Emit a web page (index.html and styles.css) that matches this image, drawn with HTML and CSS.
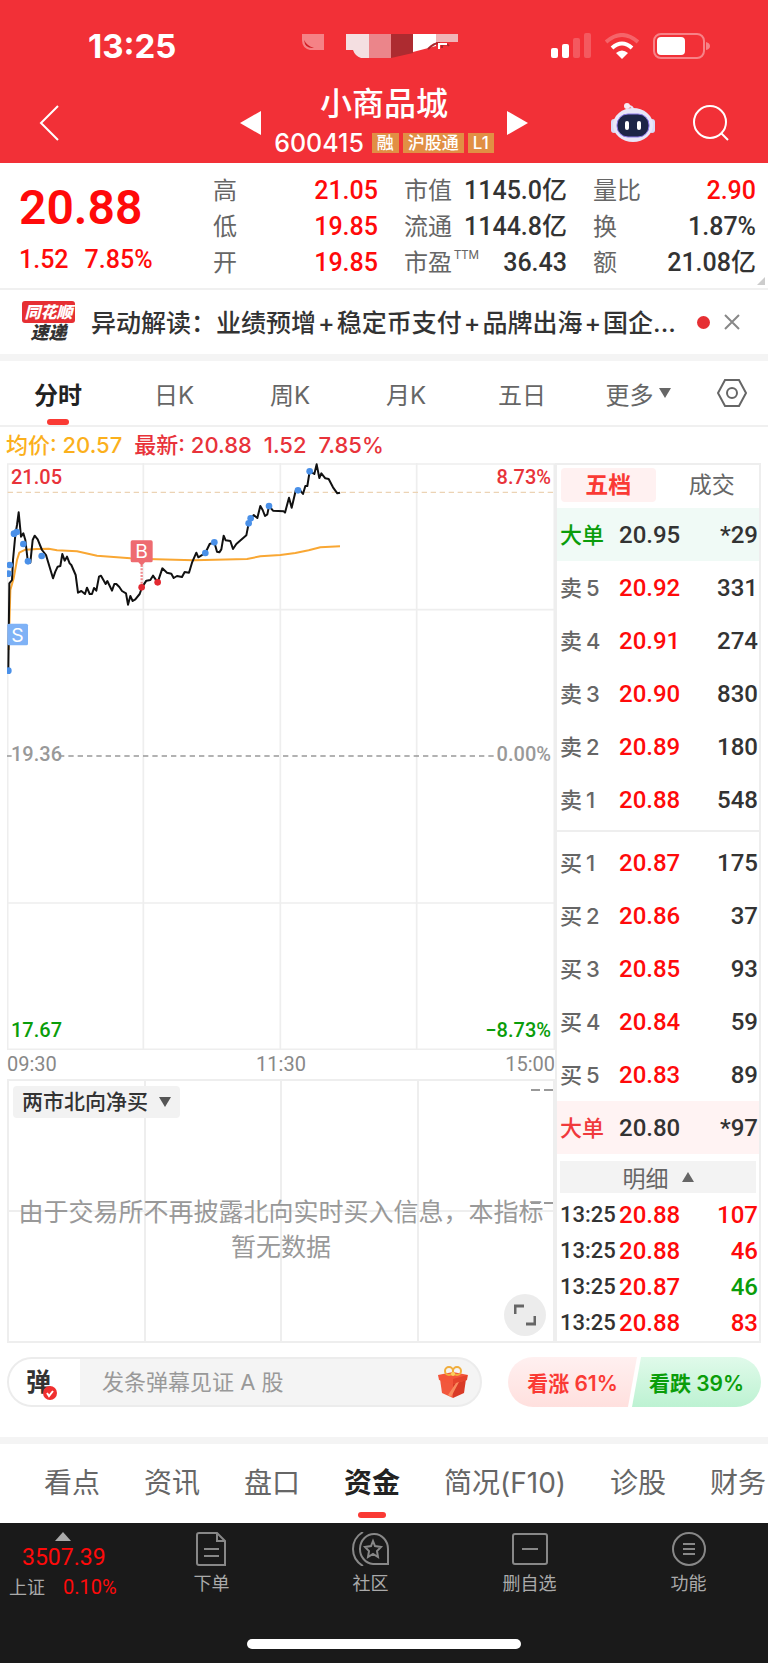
FILE: index.html
```html
<!DOCTYPE html>
<html lang="zh-CN">
<head>
    <meta charset="UTF-8">
    <meta name="viewport" content="width=device-width, initial-scale=1.0">
    <title>小商品城 600415</title>
    <link rel="stylesheet" href="styles.css">
</head>
<body>
    <header class="header">
        <div class="status-bar">
            <span class="status-time">13:25</span>
            <svg class="status-island" viewBox="0 0 156 24" aria-hidden="true">
                <path d="M0 0h22v16H8Q0 14 0 6z" fill="#f58286"/>
                <path d="M2 6q3 6 10 8-9 1-10-8z" fill="#d01c24"/>
                <path d="M44 0h23v24h-8q-6-2-8-8h-7z" fill="#f4dfe1"/>
                <path d="M67 0h22v24H67z" fill="#eb858a"/>
                <path d="M89 0h22v19l-22 5z" fill="#ad2b30"/>
                <path d="M111 0h23v12l-23 6z" fill="#fff"/>
                <path d="M134 0h22v8h-22z" fill="#f0b4b7"/>
                <path d="M126 15q6-6 11-6v5M140 14v-3q5-2 7 1" fill="none" stroke="#a8262c" stroke-width="2"/>
                <path d="M137 15v-5h8" fill="none" stroke="#fff" stroke-width="2"/>
            </svg>
            <div class="status-icons">
                <svg width="40" height="26" viewBox="0 0 40 26" fill="#fff" aria-hidden="true">
                    <rect x="0" y="15" width="7" height="10" rx="2"/>
                    <rect x="11" y="11" width="7" height="14" rx="2"/>
                    <rect x="22" y="5" width="7" height="20" rx="2" opacity=".2"/>
                    <rect x="33" y="0" width="7" height="25" rx="2" opacity=".2"/>
                </svg>
                <svg width="34" height="26" viewBox="0 0 34 26" fill="none" stroke="#fff" stroke-width="4" aria-hidden="true">
                    <path d="M1 9Q17-5 33 9" opacity=".25"/>
                    <path d="M7 15q10-9 20 0"/>
                    <path d="M11 20q6-5 12 0l-6 6z" fill="#fff" stroke="none"/>
                </svg>
                <svg width="57" height="26" viewBox="0 0 57 26" aria-hidden="true">
                    <rect x="1" y="1" width="50" height="24" rx="7" fill="none" stroke="#fff" stroke-width="2" opacity=".4"/>
                    <rect x="4" y="4" width="28" height="18" rx="4" fill="#fff"/>
                    <path d="M53 9q4 1 4 4t-4 4z" fill="#fff" opacity=".4"/>
                </svg>
            </div>
        </div>
        <div class="title-bar">
            <button class="icon-btn back" aria-label="返回">
                <svg width="20" height="36" viewBox="0 0 20 36" fill="none" stroke="#fff" stroke-width="2"><path d="M19 1L2 18l17 17"/></svg>
            </button>
            <div class="stock">
                <button class="icon-btn" aria-label="上一只">
                    <svg width="21" height="24" viewBox="0 0 21 24" fill="#fff"><path d="M0 12L21 0v24z"/></svg>
                </button>
                <div class="stock-name">
                    <h1>小商品城</h1>
                    <div class="stock-code">
                        <span>600415</span>
                        <em>融</em><em>沪股通</em><em>L1</em>
                    </div>
                </div>
                <button class="icon-btn" aria-label="下一只">
                    <svg width="21" height="24" viewBox="0 0 21 24" fill="#fff"><path d="M21 12L0 0v24z"/></svg>
                </button>
            </div>
            <div class="title-actions">
                <button class="icon-btn" aria-label="智能助手">
                    <svg width="44" height="40" viewBox="0 0 44 40">
                        <path d="M22 7q0-4-5-4" fill="none" stroke="#e6e2f5" stroke-width="2"/>
                        <circle cx="16" cy="3" r="3" fill="#f7ecf5"/>
                        <rect x="0" y="16" width="6" height="14" rx="3" fill="#d9dbf6"/>
                        <rect x="38" y="16" width="6" height="14" rx="3" fill="#d9dbf6"/>
                        <ellipse cx="22" cy="22" rx="20" ry="17" fill="#e9e6f8"/>
                        <rect x="6" y="11" width="32" height="23" rx="11" fill="#1d2547" stroke="#8d7ae8"/>
                        <rect x="14" y="18" width="4" height="9" rx="2" fill="#fff"/>
                        <rect x="26" y="18" width="4" height="9" rx="2" fill="#fff"/>
                    </svg>
                </button>
                <button class="icon-btn" aria-label="搜索">
                    <svg width="36" height="36" viewBox="0 0 36 36" fill="none" stroke="#fff" stroke-width="2"><circle cx="17" cy="17" r="16"/><path d="M28 28l7 7"/></svg>
                </button>
            </div>
        </div>
    </header>

    <section class="quote">
        <div class="quote-price">
            <strong>20.88</strong>
            <p><span>1.52</span><span>7.85%</span></p>
        </div>
        <dl class="quote-col quote-col-a">
            <div><dt>高</dt><dd class="up">21.05</dd></div>
            <div><dt>低</dt><dd class="up">19.85</dd></div>
            <div><dt>开</dt><dd class="up">19.85</dd></div>
        </dl>
        <dl class="quote-col quote-col-b">
            <div><dt>市值</dt><dd>1145.0亿</dd></div>
            <div><dt>流通</dt><dd>1144.8亿</dd></div>
            <div><dt>市盈<sup>TTM</sup></dt><dd>36.43</dd></div>
        </dl>
        <dl class="quote-col quote-col-c">
            <div><dt>量比</dt><dd class="up">2.90</dd></div>
            <div><dt>换</dt><dd>1.87%</dd></div>
            <div><dt>额</dt><dd>21.08亿</dd></div>
        </dl>
        <span class="quote-corner"></span>
    </section>

    <section class="news">
        <div class="news-logo"><b>同花顺</b><i>速递</i></div>
        <a class="news-text" href="#">异动解读：业绩预增<span>+</span>稳定币支付<span>+</span>品牌出海<span>+</span>国企...</a>
        <span class="news-dot"></span>
        <button class="icon-btn" aria-label="关闭">
            <svg width="16" height="16" viewBox="0 0 16 16" fill="none" stroke="#888" stroke-width="2"><path d="M1 1l14 14M15 1L1 15"/></svg>
        </button>
    </section>

    <nav class="period-tabs">
        <button class="active">分时</button>
        <button>日K</button>
        <button>周K</button>
        <button>月K</button>
        <button>五日</button>
        <button>更多<svg width="12" height="10" viewBox="0 0 12 10" fill="#666"><path d="M0 0h12L6 10z"/></svg></button>
        <button class="settings" aria-label="设置">
            <svg width="30" height="28" viewBox="0 0 30 28" fill="none" stroke="#666" stroke-width="2"><path d="M8 1h14l7 13-7 13H8L1 14z"/><circle cx="15" cy="14" r="5"/></svg>
        </button>
    </nav>

    <p class="price-line">
        <span class="avg">均价: 20.57</span>
        <span>最新: 20.88</span>
        <span>1.52</span>
        <span>7.85%</span>
    </p>

    <main class="board">
        <div class="charts">
            <div class="chart">
                <svg viewBox="20 39 1644 1761">
                    <g fill="none" stroke="#eee" stroke-width="5">
                        <path d="M429 39v1761M840 39v1761M1249 39v1761M20 479h1644M20 1359h1644"/>
                        <path d="M22 42h1640v1756H22z"/>
                    </g>
                    <path d="M20 918h14M176 918h1310" stroke="#999" stroke-width="4" stroke-dasharray="16 12" fill="none"/>
                    <path d="M22 127h1640" stroke="#ecd3b4" stroke-width="4" stroke-dasharray="16 11" fill="none"/>
                    <polyline class="line-avg" points="25,600 30,420 40,385 50,330 57,308 75,299 110,297 145,296 170,301 230,304 290,317 340,321 390,325 440,327 580,331 740,327 780,319 840,315 885,309 925,301 960,292 1019,289"/>
                    <polyline class="line-price" points="24,655 27,400 35,390 38,330 45,255 50,225 55,187 62,260 69,250 75,270 82,330 90,338 97,270 103,257 112,268 125,300 137,315 158,385 165,365 172,350 180,348 186,312 193,332 200,320 208,340 213,345 226,375 233,428 243,423 254,432 260,413 268,432 275,432 281,414 288,422 296,380 302,377 316,402 321,393 335,422 342,402 348,402 357,411 365,423 377,430 383,464 390,438 397,453 405,448 418,432 425,412 438,392 450,390 458,377 472,397 486,355 500,368 513,371 520,384 530,378 545,381 553,366 566,368 575,338 588,308 594,322 615,309 628,282 642,277 650,305 657,307 663,298 670,257 676,271 690,273 698,297 708,282 738,256 745,220 752,205 760,195 771,204 780,168 787,180 794,198 801,193 806,168 818,182 850,184 854,188 866,143 874,173 886,122 900,122 908,132 915,108 921,108 928,64 942,72 949,43 957,84 963,70 975,85 985,87 998,112 1011,130 1019,128"/>
                    <g class="dot-sell">
                        <circle cx="24" cy="662" r="10"/><circle cx="24" cy="371" r="10"/><circle cx="28" cy="345" r="10"/>
                        <circle cx="41" cy="251" r="10"/><circle cx="49" cy="246" r="10"/><circle cx="69" cy="282" r="10"/>
                        <circle cx="83" cy="334" r="10"/><circle cx="124" cy="318" r="10"/><circle cx="615" cy="309" r="10"/>
                        <circle cx="642" cy="277" r="10"/><circle cx="745" cy="220" r="10"/><circle cx="751" cy="205" r="10"/>
                        <circle cx="806" cy="168" r="10"/><circle cx="893" cy="121" r="10"/><circle cx="928" cy="64" r="10"/>
                    </g>
                    <g class="dot-buy"><circle cx="424" cy="412" r="10"/><circle cx="472" cy="397" r="10"/></g>
                    <path d="M424 345v60" stroke="#f08a8e" stroke-width="7" stroke-dasharray="6 4"/>
                    <path d="M396 271h56q5 0 5 5v56q0 5-5 5h-18l-10 10-10-10h-18q-5 0-5-5v-56q0-5 5-5z" fill="#ee6b70"/>
                    <text class="marker" x="424" y="325">B</text>
                    <rect x="21" y="521" width="62" height="65" rx="5" fill="#7fb2f6"/>
                    <text class="marker" x="51" y="575">S</text>
                </svg>
                <span class="lbl top left up">21.05</span>
                <span class="lbl top right up">8.73%</span>
                <span class="lbl mid left">19.36</span>
                <span class="lbl mid right">0.00%</span>
                <span class="lbl bottom left down">17.67</span>
                <span class="lbl bottom right down">−8.73%</span>
            </div>
            <div class="time-axis"><span>09:30</span><span>11:30</span><span>15:00</span></div>
            <div class="indicator">
                <label class="indicator-select">
                    <select aria-label="指标"><option>两市北向净买</option></select>
                    <svg width="12" height="10" viewBox="0 0 12 10" fill="#555"><path d="M0 0h12L6 10z"/></svg>
                </label>
                <span class="dash dash-top"></span>
                <span class="dash dash-mid"></span>
                <p>由于交易所不再披露北向实时买入信息，本指标暂无数据</p>
                <button class="expand" aria-label="全屏">
                    <svg width="22" height="22" viewBox="0 0 22 22" fill="none" stroke="#666" stroke-width="3"><path d="M1 10V2h9M21 12v8h-9"/></svg>
                </button>
            </div>
        </div>

        <aside class="book">
            <div class="book-tabs">
                <button class="active">五档</button>
                <button>成交</button>
            </div>
            <table>
                <tbody class="big-sell"><tr><th>大单</th><td>20.95</td><td>*29</td></tr></tbody>
                <tbody>
                    <tr><th>卖<i>5</i></th><td>20.92</td><td>331</td></tr>
                    <tr><th>卖<i>4</i></th><td>20.91</td><td>274</td></tr>
                    <tr><th>卖<i>3</i></th><td>20.90</td><td>830</td></tr>
                    <tr><th>卖<i>2</i></th><td>20.89</td><td>180</td></tr>
                    <tr><th>卖<i>1</i></th><td>20.88</td><td>548</td></tr>
                </tbody>
            </table>
            <table class="buy">
                <tbody>
                    <tr><th>买<i>1</i></th><td>20.87</td><td>175</td></tr>
                    <tr><th>买<i>2</i></th><td>20.86</td><td>37</td></tr>
                    <tr><th>买<i>3</i></th><td>20.85</td><td>93</td></tr>
                    <tr><th>买<i>4</i></th><td>20.84</td><td>59</td></tr>
                    <tr><th>买<i>5</i></th><td>20.83</td><td>89</td></tr>
                </tbody>
                <tbody class="big-buy"><tr><th>大单</th><td>20.80</td><td>*97</td></tr></tbody>
            </table>
            <button class="detail">明细<svg width="12" height="10" viewBox="0 0 12 10" fill="#666"><path d="M0 10h12L6 0z"/></svg></button>
            <table class="ticks">
                <tbody>
                    <tr><th>13:25</th><td>20.88</td><td class="up">107</td></tr>
                    <tr><th>13:25</th><td>20.88</td><td class="up">46</td></tr>
                    <tr><th>13:25</th><td>20.87</td><td class="down">46</td></tr>
                    <tr><th>13:25</th><td>20.88</td><td class="up">83</td></tr>
                </tbody>
            </table>
        </aside>
    </main>

    <section class="comment">
        <div class="comment-box">
            <button class="danmu" aria-label="弹幕开关">弹<svg width="14" height="14" viewBox="0 0 14 14"><circle cx="7" cy="7" r="7" fill="#f0302f"/><path d="M4 7l2 3 4-5" fill="none" stroke="#fff" stroke-width="2"/></svg></button>
            <input type="text" placeholder="发条弹幕见证 A 股" aria-label="发条弹幕">
            <button class="icon-btn gift" aria-label="礼物">
                <svg width="32" height="32" viewBox="0 0 32 32">
                    <path d="M3 13l13 3v16L5 27z" fill="#f2573c"/>
                    <path d="M29 13l-13 3v16l11-5z" fill="#d93a26"/>
                    <path d="M1 9l15-3 15 3-1 5-14 4-14-4z" fill="#f4553a"/>
                    <path d="M16 13l14-4v5l-14 4z" fill="#e5432c"/>
                    <path d="M11 29l8-12 3-1-8 15z" fill="#f98a5c"/>
                    <g fill="none" stroke="#f0ad3c" stroke-width="2"><circle cx="12" cy="5" r="4"/><circle cx="20" cy="5" r="4"/></g>
                    <circle cx="16" cy="8" r="2" fill="#fbd15c"/>
                </svg>
            </button>
        </div>
        <div class="vote">
            <button class="vote-up">看涨 61%</button>
            <button class="vote-down">看跌 39%</button>
        </div>
    </section>

    <nav class="info-tabs">
        <a href="#">看点</a>
        <a href="#">资讯</a>
        <a href="#">盘口</a>
        <a href="#" class="active">资金</a>
        <a href="#">简况(F10)</a>
        <a href="#">诊股</a>
        <a href="#">财务</a>
    </nav>

    <footer class="footer">
        <div class="footer-row">
            <a class="index" href="#">
                <svg width="16" height="9" viewBox="0 0 16 9" fill="#aaa"><path d="M0 9h16L8 0z"/></svg>
                <b>3507.39</b>
                <span>上证<em>0.10%</em></span>
            </a>
            <a class="tool" href="#">
                <svg width="34" height="34" viewBox="0 0 34 34"><path d="M4 1h18l8 8v24H4q-2 0-2-2V3q0-2 2-2zM22 1v8h8M9 17h15M9 24h15"/></svg>
                下单
            </a>
            <a class="tool" href="#">
                <svg width="38" height="34" viewBox="0 0 38 34"><path d="M36 32H21A14 15 0 1 1 36 17zM11 0Q1 6 1 17t10 17M21 9l2 5 6 1-4 4 1 6-5-3-5 3 1-6-4-4 6-1z"/></svg>
                社区
            </a>
            <a class="tool" href="#">
                <svg width="36" height="34" viewBox="0 0 36 34"><rect x="1" y="2" width="34" height="30" rx="2"/><path d="M10 17h16"/></svg>
                删自选
            </a>
            <a class="tool" href="#">
                <svg width="34" height="34" viewBox="0 0 34 34"><circle cx="17" cy="17" r="16"/><path d="M11 12h12M11 17h12M11 22h12"/></svg>
                功能
            </a>
        </div>
        <div class="home-bar"></div>
    </footer>
</body>
</html>
```

FILE: styles.css
```css
* {
    margin: 0;
    padding: 0;
    box-sizing: border-box;
}

body {
    font-family: Inter, "Noto Sans CJK SC", sans-serif;
    background: #fff;
    color: #333;
}

button,
input,
select {
    font: inherit;
    color: inherit;
    border: none;
    background: none;
    cursor: pointer;
}

a {
    color: inherit;
    text-decoration: none;
}

em,
i {
    font-style: normal;
}

svg {
    display: block;
    flex: none;
}

.icon-btn {
    display: flex;
}

.up {
    color: #ff0a0a;
}

.down {
    color: #0a9d0a;
}

/* 顶部 */
.header {
    background: #f23037;
    color: #fff;
    height: 163px;
    padding-top: 28px;
}

.status-bar {
    display: flex;
    align-items: center;
    height: 36px;
    padding: 0 58px 0 50px;
}

.status-time {
    flex: 1;
    text-indent: 38px;
    font-size: 33px;
    font-weight: 700;
}

.status-island {
    width: 156px;
    height: 24px;
}

.status-icons {
    flex: 1;
    display: flex;
    justify-content: flex-end;
    gap: 14px;
}

.title-bar {
    display: flex;
    align-items: center;
    padding: 20px 39px 0;
}

.back,
.title-actions {
    flex: 1;
}

.stock {
    display: flex;
    align-items: center;
    gap: 13px;
}

.stock-name {
    text-align: center;
}

.stock-name h1 {
    font-size: 32px;
    font-weight: 500;
    line-height: 40px;
}

.stock-code {
    display: flex;
    align-items: center;
    gap: 4px;
    font-size: 25px;
    font-weight: 500;
    line-height: 38px;
}

.stock-code span {
    margin-right: 4px;
}

.stock-code em {
    background: #e18f44;
    font-size: 17px;
    line-height: 20px;
    padding: 0 5px;
}

.title-actions {
    display: flex;
    align-items: center;
    justify-content: flex-end;
    gap: 38px;
}

/* 行情 */
.quote {
    position: relative;
    display: flex;
    height: 127px;
    padding: 10px 12px 0 19px;
    border-bottom: 2px solid #f0f0f0;
    font-family: Roboto, "Noto Sans CJK SC", sans-serif;
}

.quote-price {
    flex: 1;
    color: #ff0a0a;
    font-weight: 500;
}

.quote-price strong {
    display: block;
    font-size: 48px;
    font-weight: 600;
    line-height: 70px;
}

.quote-price p {
    display: flex;
    gap: 16px;
    font-size: 25px;
    line-height: 34px;
}

.quote-col {
    margin-right: 26px;
}

.quote-col-a {
    width: 165px;
}

.quote-col-b,
.quote-col-c {
    width: 163px;
}

.quote-col-c {
    margin-right: 0;
}

.quote-col div {
    display: flex;
    justify-content: space-between;
    line-height: 36px;
}

.quote-col dt {
    font-size: 24px;
    color: #666;
    white-space: nowrap;
}

.quote-col dd {
    font-size: 25px;
    font-weight: 500;
}

.quote-col sup {
    font-size: 12px;
    line-height: 12px;
    vertical-align: 12px;
    margin-left: 2px;
}

.quote-corner {
    position: absolute;
    right: 3px;
    bottom: 3px;
    border: 4px solid transparent;
    border-right-color: #ccc;
    border-bottom-color: #ccc;
}

/* 异动 */
.news {
    display: flex;
    align-items: center;
    height: 64px;
    padding: 0 28px 0 22px;
}

.news-logo {
    width: 53px;
    margin-right: 16px;
    font-weight: 900;
    font-size: 16px;
    line-height: 20px;
    text-align: center;
}

.news-logo b {
    display: block;
    background: #e62f33;
    color: #fff;
    border-radius: 3px;
    line-height: 22px;
    font-style: italic;
    font-weight: 900;
}

.news-logo i {
    font-size: 18px;
    font-style: italic;
}

.news-text {
    flex: 1;
    padding-bottom: 3px;
    font-size: 25px;
    font-weight: 500;
    white-space: nowrap;
}

.news-text span {
    margin: 0 2px;
}

.news-dot {
    width: 13px;
    height: 13px;
    border-radius: 50%;
    background: #e62f33;
    margin-right: 14px;
}

/* 周期 */
.period-tabs {
    display: flex;
    align-items: center;
    height: 73px;
    border-top: 7px solid #f4f4f4;
    border-bottom: 2px solid #f0f0f0;
    font-size: 24px;
    color: #666;
}

.period-tabs button {
    flex: 1;
    display: flex;
    align-items: center;
    justify-content: center;
    gap: 5px;
    height: 64px;
    position: relative;
}

.period-tabs .settings {
    flex: none;
    width: 72px;
}

.active {
    font-weight: 700;
    color: #222;
}

.period-tabs .active::after,
.info-tabs .active::after {
    content: "";
    position: absolute;
    left: 50%;
    bottom: 0;
    width: 22px;
    height: 6px;
    margin-left: -11px;
    border-radius: 3px;
    background: #fa3a34;
}

.price-line {
    display: flex;
    gap: 12px;
    padding: 0 6px;
    font-size: 22px;
    line-height: 36px;
    font-weight: 500;
    color: #e8333a;
}

.price-line .avg {
    color: #fbb01c;
}

/* 图表 */
.board {
    display: flex;
    padding: 0 7px;
}

.charts {
    flex: 1;
    display: flex;
    flex-direction: column;
    font-family: Roboto, "Noto Sans CJK SC", sans-serif;
}

.chart {
    position: relative;
}

.chart svg {
    width: 100%;
    height: auto;
}

.line-avg,
.line-price {
    fill: none;
    stroke: #f9a733;
    stroke-width: 6;
    stroke-linejoin: round;
}

.line-price {
    stroke: #111;
}

.dot-sell {
    fill: #4a90e8;
}

.dot-buy {
    fill: #e32931;
}

.marker {
    font-family: Inter, sans-serif;
    font-size: 58px;
    fill: #fff;
    text-anchor: middle;
}

.lbl {
    position: absolute;
    font-size: 20px;
    line-height: 20px;
    font-weight: 500;
    color: #999;
}

.lbl.up {
    color: #e8333a;
}

.lbl.down {
    color: #0a9d0a;
}

.lbl.left {
    left: 4px;
}

.lbl.right {
    right: 4px;
}

.lbl.top {
    top: 4px;
}

.lbl.mid {
    top: 50%;
    margin-top: -13px;
}

.lbl.bottom {
    bottom: 10px;
}

.time-axis {
    display: flex;
    justify-content: space-between;
    font-size: 20px;
    line-height: 29px;
    color: #888;
}

.indicator {
    position: relative;
    flex: 1;
    border: 2px solid #eee;
    background:
        linear-gradient(#eee, #eee) 25% 0 / 2px 100% no-repeat,
        linear-gradient(#eee, #eee) 50% 0 / 2px 100% no-repeat,
        linear-gradient(#eee, #eee) 75% 0 / 2px 100% no-repeat,
        linear-gradient(#eee, #eee) 0 50% / 100% 2px no-repeat;
    background-origin: border-box;
    padding: 5px 4px;
}

.indicator-select {
    display: inline-flex;
    align-items: center;
    height: 32px;
    padding: 0 9px;
    gap: 11px;
    border-radius: 4px;
    background: #f2f2f2;
    font-size: 21px;
}

.indicator-select select {
    appearance: none;
    color: #333;
    font-weight: 500;
}

.indicator p {
    margin-top: 77px;
    font-size: 25px;
    line-height: 35px;
    text-align: center;
    color: #999;
}

.dash {
    position: absolute;
    right: 0;
    width: 22px;
    height: 2px;
    background: repeating-linear-gradient(90deg, #999 0 9px, transparent 9px 13px);
}

.dash-top {
    top: 8px;
}

.dash-mid {
    top: 121px;
}

.expand {
    position: absolute;
    right: 7px;
    bottom: 5px;
    width: 42px;
    height: 42px;
    border-radius: 50%;
    background: #ececec;
    display: flex;
    align-items: center;
    justify-content: center;
}

/* 五档 */
.book {
    width: 206px;
    border: 2px solid #eee;
}

.book-tabs {
    display: flex;
    gap: 9px;
    padding: 3px 0 6px 4px;
    font-size: 23px;
    line-height: 34px;
    color: #666;
}

.book-tabs button {
    flex: 1;
}

.book-tabs .active {
    background: #fff1f1;
    color: #fa3a34;
    border-radius: 4px;
}

.book table {
    width: 100%;
    table-layout: fixed;
    border-collapse: separate;
    border-spacing: 0;
    margin-bottom: 4px;
}

.book th,
.book td {
    height: 53px;
    font-weight: 500;
    font-size: 24px;
    line-height: 24px;
}

.book th {
    width: 62px;
    padding-left: 3px;
    text-align: left;
    font-size: 22px;
    color: #666;
    white-space: nowrap;
}

.book th i {
    margin-left: 4px;
}

.book td {
    font-family: Roboto, sans-serif;
    color: #ff0a0a;
}

.book td:last-child {
    width: 78px;
    padding-right: 1px;
    text-align: right;
    color: #333;
}

.book .big-sell,
.book .big-buy {
    background: #f0faf6;
}

.book .big-buy {
    background: #fff3f3;
}

.book .big-sell td,
.book .big-buy td {
    color: #333;
}

.book .big-sell th {
    color: #0a9d0a;
}

.book .big-buy th {
    color: #f0393c;
}

.book .buy {
    border-top: 2px solid #eee;
    padding-top: 4px;
    margin-bottom: 7px;
}

.detail {
    display: flex;
    align-items: center;
    justify-content: center;
    gap: 13px;
    width: 196px;
    margin: 0 3px 4px;
    height: 32px;
    background: #f3f3f3;
    font-size: 23px;
    color: #666;
}

.book .ticks {
    margin-bottom: 0;
}

.book .ticks th,
.book .ticks td {
    height: 36px;
}

.book .ticks th {
    font-family: Roboto, sans-serif;
    color: #333;
}

.book .ticks td.up {
    color: #ff0a0a;
}

.book .ticks td.down {
    color: #0a9d0a;
}

/* 弹幕 */
.comment {
    display: flex;
    gap: 26px;
    padding: 14px 7px 30px;
    border-bottom: 7px solid #f4f4f4;
}

.comment-box {
    flex: 1;
    display: flex;
    align-items: center;
    height: 50px;
    border: 2px solid #ececec;
    border-radius: 25px;
    overflow: hidden;
    background: #f4f4f4;
}

.danmu {
    display: flex;
    align-items: flex-end;
    width: 71px;
    height: 46px;
    padding: 0 0 5px 17px;
    background: #fff;
    font-size: 25px;
    font-weight: 700;
    line-height: 36px;
}

.danmu svg {
    margin-left: -8px;
}

.comment-box input {
    flex: 1;
    min-width: 0;
    padding-left: 22px;
    font-size: 22px;
}

.comment-box input::placeholder {
    color: #999;
}

.gift {
    margin-right: 11px;
}

.vote {
    display: flex;
    font-size: 21px;
}

.vote button {
    height: 50px;
    width: 129px;
    font-weight: 600;
}

.vote-up {
    color: #fa3a34;
    background: linear-gradient(#fff0f0, #ffe0de);
    border-radius: 25px 0 0 25px;
    clip-path: polygon(0 0, 100% 0, 93% 100%, 0 100%);
}

.vote-down {
    color: #0a9d0a;
    background: linear-gradient(#e0faea, #bdf2d2);
    border-radius: 0 25px 25px 0;
    clip-path: polygon(7% 0, 100% 0, 100% 100%, 0 100%);
    margin-left: -5px;
}

/* 资讯栏目 */
.info-tabs {
    display: flex;
    gap: 44px;
    padding-left: 44px;
    height: 79px;
    font-size: 28px;
    line-height: 78px;
    white-space: nowrap;
    color: #666;
}

.info-tabs a {
    position: relative;
}

.info-tabs .active {
    color: #222;
}

.info-tabs .active::after {
    width: 28px;
    margin-left: -14px;
    bottom: 5px;
}

/* 底部 */
.footer {
    background: #1a1a1a;
    color: #aaa;
    height: 140px;
    padding: 9px 0 14px;
    display: flex;
    flex-direction: column;
    justify-content: space-between;
}

.footer-row {
    display: flex;
    font-size: 18px;
    line-height: 24px;
}

.index {
    width: 132px;
    padding-left: 9px;
    display: flex;
    flex-direction: column;
    font-family: Roboto, "Noto Sans CJK SC", sans-serif;
}

.index svg {
    margin-left: 46px;
}

.index b {
    margin-left: 13px;
    font-size: 23px;
    font-weight: 400;
    line-height: 34px;
    color: #ff0a0a;
}

.index em {
    margin-left: 18px;
    font-size: 20px;
    color: #ff0a0a;
}

.tool {
    flex: 1;
    display: flex;
    flex-direction: column;
    align-items: center;
    gap: 6px;
}

.tool svg {
    fill: none;
    stroke: #888;
    stroke-width: 2;
}

.home-bar {
    width: 274px;
    height: 10px;
    border-radius: 5px;
    background: #fff;
    align-self: center;
}
```
